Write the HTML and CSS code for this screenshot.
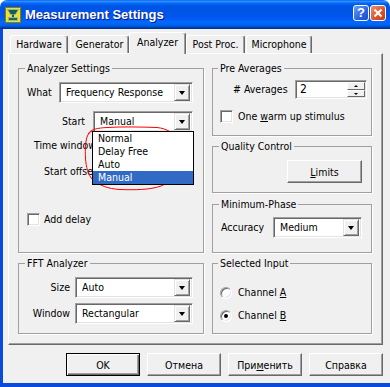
FILE: index.html
```html
<!DOCTYPE html>
<html lang="en">
<head>
  <meta charset="UTF-8">
  <title>Measurement Settings</title>
  <link rel="stylesheet" href="styles.css">
</head>
<body>
  <div class="window">
    <div class="titlebar">
      <svg class="app-icon" width="16" height="16" viewBox="0 0 16 16">
        <rect x="0.5" y="0.5" width="15" height="15" fill="#f3e21a" stroke="#8a7d00"/>
        <path d="M2.5 2.5h11l-3 5h-5z" fill="#1d5a52" stroke="#7ab8d8"/>
        <rect x="7" y="7.5" width="2" height="3" fill="#1d5a52"/>
        <path d="M3.5 10.5h9v3h-9z" fill="#2f6b3a" stroke="#7ab8d8"/>
      </svg>
      <span class="title">Measurement Settings</span>
      <span class="cap-btn help">?</span>
      <span class="cap-btn close">
        <svg width="14" height="14" viewBox="0 0 14 14"><path d="M3.5 3.5l7 7M10.5 3.5l-7 7" stroke="#fff" stroke-width="2"/></svg>
      </span>
    </div>
    <div class="frame">
      <div class="client">
        <div class="tabs">
          <div class="tab t-hardware">Hardware</div>
          <div class="tab t-generator">Generator</div>
          <div class="tab t-analyzer active">Analyzer</div>
          <div class="tab t-post">Post Proc.</div>
          <div class="tab t-mic">Microphone</div>
        </div>

        <div class="panel">
          <div class="col col-left">
            <fieldset class="group g-analyzer">
              <legend>Analyzer Settings</legend>
              <div class="row row-what">
                <span class="lbl lbl-what">What</span>
                <div class="combo c-what"><span class="combo-text">Frequency Response</span><span class="drop-btn"></span></div>
              </div>
              <div class="row row-start">
                <span class="lbl lbl-start">Start</span>
                <div class="combo c-start">
                  <span class="combo-text">Manual</span><span class="drop-btn"></span>
                  <ul class="drop-list">
                    <li>Normal</li>
                    <li>Delay Free</li>
                    <li>Auto</li>
                    <li class="sel">Manual</li>
                  </ul>
                </div>
              </div>
              <div class="lbl-line l-time">Time window</div>
              <div class="lbl-line l-offset">Start offset</div>
              <div class="check c-delay"><span class="box"></span><span>Add delay</span></div>
            </fieldset>

            <fieldset class="group g-fft">
              <legend>FFT Analyzer</legend>
              <div class="row row-size">
                <span class="lbl lbl-fft">Size</span>
                <div class="combo c-fft"><span class="combo-text">Auto</span><span class="drop-btn"></span></div>
              </div>
              <div class="row row-window">
                <span class="lbl lbl-fft">Window</span>
                <div class="combo c-fft"><span class="combo-text">Rectangular</span><span class="drop-btn"></span></div>
              </div>
            </fieldset>
          </div>

          <div class="col col-right">
            <fieldset class="group g-pre">
              <legend>Pre Averages</legend>
              <div class="row row-avg">
                <span class="lbl lbl-avg"># Averages</span>
                <div class="spin">
                  <span class="spin-text">2</span>
                  <span class="spin-btns"><span class="spin-btn up"></span><span class="spin-btn down"></span></span>
                </div>
              </div>
              <div class="check c-warm"><span class="box"></span><span>One <u>w</u>arm up stimulus</span></div>
            </fieldset>

            <fieldset class="group g-quality">
              <legend>Quality Control</legend>
              <div class="btn btn-limits"><span><u>L</u>imits</span></div>
            </fieldset>

            <fieldset class="group g-min">
              <legend>Minimum-Phase</legend>
              <div class="row row-acc">
                <span class="lbl lbl-acc">Accuracy</span>
                <div class="combo c-acc"><span class="combo-text">Medium</span><span class="drop-btn"></span></div>
              </div>
            </fieldset>

            <fieldset class="group g-input">
              <legend>Selected Input</legend>
              <div class="radio r-a"><span class="dot"></span><span>Channel <u>A</u></span></div>
              <div class="radio r-b checked"><span class="dot"></span><span>Channel <u>B</u></span></div>
            </fieldset>
          </div>
        </div>

        <div class="buttons">
          <div class="btn default">OK</div>
          <div class="btn">Отмена</div>
          <div class="btn"><span>При<u>м</u>енить</span></div>
          <div class="btn">Справка</div>
        </div>

        <!-- hand drawn mark around the open list -->
        <svg class="scribble" width="104" height="70" viewBox="0 0 104 70">
          <path d="M6 10 C9 5 16 4 25 3.5 C40 2.5 60 3 75 3.5 C85 4.5 92 9 95 16 C98 23 98.5 33 97 42 C95 51 89 58 79 62 C68 66 52 66 38 65.5 C26 65 17 61 11 56 C6 51 4 43 3.5 34 C3 25 3.5 18 5 13 C6 10 8 8 10 7"
                fill="none" stroke="#f00" stroke-width="1"/>
        </svg>
      </div>
    </div>
  </div>
</body>
</html>
```

FILE: styles.css
```css
* { box-sizing: border-box; }
body {
  margin: 0;
  font-family: "DejaVu Sans Condensed", "Liberation Sans", Arial, sans-serif;
  font-size: 10.5px;
  color: #000;
  background: #fff;
}
u { text-decoration: underline; text-underline-offset: 1px; }

.window { width: 390px; height: 387px; display: flex; flex-direction: column; }

/* Title bar (XP Luna) */
.titlebar {
  height: 29px;
  display: flex;
  align-items: center;
  padding: 0 4px 0 5px;
  border-radius: 7px 7px 0 0;
  background: linear-gradient(to bottom, #0058ee 0%, #3593ff 4%, #288eff 6%, #127dff 8%, #036ffc 10%, #0262ee 14%, #0057e5 20%, #0054e3 24%, #0055eb 56%, #005bf5 66%, #026afe 76%, #0062ef 86%, #0052d6 92%, #0040ab 94%, #003092 100%);
}
.app-icon { display: block; margin-top: 1px; }
.title {
  flex: 1;
  margin-left: 4px;
  color: #fff;
  font-family: "Liberation Sans", Arial, sans-serif;
  font-weight: bold;
  font-size: 13px;
  text-shadow: 1px 1px 0 #0a1883;
  margin-top: -1px;
}
.cap-btn {
  width: 16px; height: 16px;
  border: 1px solid #fff;
  border-radius: 3px;
  display: flex; align-items: center; justify-content: center;
  margin-top: -3px;
}
.help {
  background: linear-gradient(135deg, #6fa0f8, #2a63e0 60%, #1c4fc8);
  color: #fff; font-family: "Liberation Sans", Arial, sans-serif;
  font-weight: bold; font-size: 13px; line-height: 14px;
  margin-right: 1px;
}
.close { background: linear-gradient(135deg, #f0906e, #e0542f 55%, #c33a14); }
.close svg { display: block; }

.frame { flex: 1; display: flex; background: #0a4bdc; padding: 0 0 4px 3px; }
.client {
  flex: 1;
  position: relative;
  background: #f0f0f0;
  padding: 3px 7px 0 5px;
  display: flex;
  flex-direction: column;
}

/* Tabs */
.tabs { display: flex; align-items: flex-end; height: 21px; padding-left: 2px; position: relative; z-index: 1; }
.tab {
  height: 18px;
  border: 1px solid #fff;
  border-right-color: #696969;
  border-bottom: none;
  border-radius: 3px 3px 0 0;
  box-shadow: inset -1px 0 0 #a0a0a0;
  text-align: center;
  line-height: 13px;
  padding-top: 2px;
  background: #f0f0f0;
}
.t-hardware { width: 58px; margin-right: 2px; }
.t-generator { width: 59px; }
.t-analyzer { width: 57px; }
.t-post { width: 59px; margin-right: 1px; }
.t-mic { width: 66px; }
.tab.active { height: 22px; margin-bottom: -1px; padding-top: 3px; position: relative; z-index: 2; }

/* Tab page */
.panel {
  height: 292px;
  border: 1px solid;
  border-color: #fff #696969 #696969 #fff;
  box-shadow: inset -1px -1px 0 #a0a0a0;
  display: flex;
  gap: 8px;
  padding: 8px 0 0 9px;
}
.col { display: flex; flex-direction: column; }
.col-left { width: 186px; }
.col-right { width: 160px; }

.group {
  margin: 0;
  padding: 0 0 0 8px;
  min-width: 0;
  border: 1px solid #a0a0a0;
  box-shadow: 1px 1px 0 #fff;
}
.group legend { margin-left: -2px; padding: 0 2px; line-height: 13px; }
.g-analyzer { height: 191px; }
.g-fft { height: 77px; margin-top: 4px; }
.g-pre { height: 74px; padding-left: 7px; }
.g-quality { height: 53px; margin-top: 4px; }
.g-min { height: 55px; margin-top: 5px; }
.g-input { height: 77px; margin-top: 4px; padding-left: 7px; }

.row { display: flex; align-items: center; }
.lbl { line-height: 13px; white-space: nowrap; }
.row-what { margin-top: 7px; }
.lbl-what { width: 32px; }
.c-what { width: 134px; }
.row-start { margin-top: 8px; }
.lbl-start { width: 66px; text-align: right; padding-right: 8px; }
.c-start { width: 100px; }
.lbl-line { line-height: 13px; white-space: nowrap; }
.l-time { margin: 7px 0 0 7px; }
.l-offset { margin: 13px 0 0 17px; }
.c-delay { margin-top: 35px; }

.row-size { margin-top: 7px; }
.row-window { margin-top: 5px; }
.lbl-fft { width: 48px; text-align: right; padding-right: 5px; }
.c-fft { width: 118px; }

.row-avg { margin-top: 5px; }
.lbl-avg { width: 75px; padding-left: 13px; }
.c-warm { margin-top: 11px; }
.btn-limits { margin: 7px 0 0 66px; }
.row-acc { margin-top: 6px; }
.lbl-acc { width: 52px; }
.c-acc { width: 89px; }
.r-a { margin-top: 16px; }
.r-b { margin-top: 10px; }

/* Combo box */
.combo {
  position: relative;
  height: 21px;
  display: flex;
  align-items: center;
  background: #fff;
  border: 1px solid;
  border-color: #a0a0a0 #fff #fff #a0a0a0;
  box-shadow: inset 1px 1px 0 #696969, inset -1px -1px 0 #e3e3e3;
  padding: 2px 2px 2px 6px;
}
.combo-text { flex: 1; white-space: nowrap; overflow: hidden; line-height: 13px; }
.drop-btn {
  width: 16px;
  height: 17px;
  position: relative;
  background: #f0f0f0;
  border: 1px solid;
  border-color: #e3e3e3 #696969 #696969 #e3e3e3;
  box-shadow: inset 1px 1px 0 #fff, inset -1px -1px 0 #a0a0a0;
}
.drop-btn::after {
  content: "";
  position: absolute;
  left: 4px; top: 6px;
  border-left: 3.5px solid transparent;
  border-right: 3.5px solid transparent;
  border-top: 4px solid #000;
}

/* Open list of the Start combo */
.drop-list {
  position: absolute;
  z-index: 5;
  left: -2px;
  top: 19px;
  width: 102px;
  margin: 0;
  padding: 0;
  list-style: none;
  background: #fff;
  border: 1px solid #000;
}
.drop-list li { height: 13px; line-height: 13px; padding-left: 5px; }
.drop-list li.sel { background: #316ac5; color: #fff; }

/* Spin edit */
.spin {
  width: 72px;
  height: 19px;
  display: flex;
  background: #fff;
  border: 1px solid;
  border-color: #a0a0a0 #fff #fff #a0a0a0;
  box-shadow: inset 1px 1px 0 #696969, inset -1px -1px 0 #e3e3e3;
  padding: 1px 1px 1px 4px;
}
.spin-text { flex: 1; line-height: 15px; font-size: 12px; }
.spin-btns { display: flex; flex-direction: column; width: 18px; }
.spin-btn {
  flex: 1;
  position: relative;
  background: #f0f0f0;
  border: 1px solid;
  border-color: #fff #696969 #696969 #fff;
}
.spin-btn::after {
  content: "";
  position: absolute;
  left: 6px; top: 2px;
  border-left: 2px solid transparent;
  border-right: 2px solid transparent;
}
.spin-btn.up::after { border-bottom: 2px solid #000; }
.spin-btn.down::after { border-top: 2px solid #000; }

/* Check box and radio */
.check, .radio { display: flex; align-items: center; line-height: 13px; white-space: nowrap; }
.check .box {
  width: 13px; height: 13px;
  margin-right: 5px;
  background: #fff;
  border: 1px solid;
  border-color: #a0a0a0 #fff #fff #a0a0a0;
  box-shadow: inset 1px 1px 0 #696969, inset -1px -1px 0 #e3e3e3;
}
.c-delay .box { margin-right: 4px; }
.radio .dot {
  width: 12px; height: 12px;
  margin-right: 6px;
  border-radius: 50%;
  background: #fff;
  border: 1px solid;
  border-color: #a0a0a0 #fff #fff #a0a0a0;
  box-shadow: inset 1px 1px 0 #696969, inset -1px -1px 0 #e3e3e3;
  position: relative;
}
.radio.checked .dot::after {
  content: "";
  position: absolute;
  left: 3px; top: 3px;
  width: 4px; height: 4px;
  border-radius: 50%;
  background: #000;
}

/* Push buttons */
.btn {
  width: 75px;
  height: 23px;
  display: flex;
  align-items: center;
  justify-content: center;
  background: #f0f0f0;
  border: 1px solid;
  border-color: #fff #696969 #696969 #fff;
  box-shadow: inset -1px -1px 0 #a0a0a0;
}
.buttons {
  display: flex;
  justify-content: flex-end;
  gap: 7px;
  margin-top: 8px;
}
.buttons .btn { width: 74px; }
.btn.default {
  border: 1px solid #000;
  box-shadow: inset 1px 1px 0 #fff, inset -1px -1px 0 #696969, inset -2px -2px 0 #a0a0a0;
}

.scribble { position: absolute; left: 79px; top: 95px; pointer-events: none; }
```
